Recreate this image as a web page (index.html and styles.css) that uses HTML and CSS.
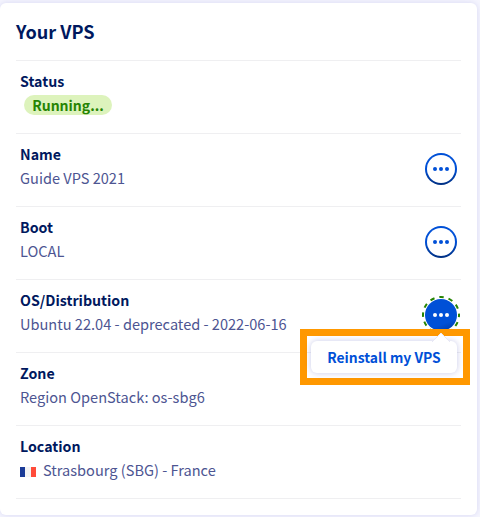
FILE: index.html
```html
<!DOCTYPE html>
<html lang="en">
<head>
<meta charset="utf-8">
<title>Your VPS</title>
<link rel="stylesheet" href="styles.css">
</head>
<body>
<section class="card">
  <h2 class="title">Your VPS</h2>
  <dl class="list">
    <div class="row"><div class="text"><dt>Status</dt><dd><span class="badge">Running...</span></dd></div></div>
    <div class="row"><div class="text"><dt>Name</dt><dd>Guide VPS 2021</dd></div>
      <button class="action" aria-label="Name actions"><i></i><i></i><i></i></button></div>
    <div class="row"><div class="text"><dt>Boot</dt><dd>LOCAL</dd></div>
      <button class="action" aria-label="Boot actions"><i></i><i></i><i></i></button></div>
    <div class="row"><div class="text"><dt>OS/Distribution</dt><dd>Ubuntu 22.04 - deprecated - 2022-06-16</dd></div>
      <button class="action active" aria-label="OS actions"><svg class="focus" viewBox="0 0 38 38"><circle cx="19" cy="19" r="18"/></svg><i></i><i></i><i></i></button>
      <div class="highlight"><div class="menu"><svg class="arrow" viewBox="0 0 18 9"><path d="M0 9 9 0l9 9"/></svg><span>Reinstall my VPS</span></div></div></div>
    <div class="row"><div class="text"><dt>Zone</dt><dd>Region OpenStack: os-sbg6</dd></div></div>
    <div class="row"><div class="text"><dt>Location</dt><dd class="place"><span class="flag"></span>Strasbourg (SBG) - France</dd></div></div>
  </dl>
</section>
</body>
</html>
```
FILE: styles.css
```css
* { box-sizing: border-box; }
body {
  margin: 0;
  padding: 3px 3px 2px 0;
  height: 517px;
  overflow: hidden;
  background: #f5f5fe;
  font: 14.2px/24px "Noto Sans CJK SC", "Open Sans", sans-serif;
  color: #4d5592;
}
.card {
  height: 512px;
  padding: 0 16px;
  background: #fff;
  border-radius: 6px;
  box-shadow: 0 0 6px rgba(0, 14, 156, .12);
}
.title {
  margin: 0;
  height: 58px;
  border-bottom: 1px solid #efeff1;
  color: #00185e;
  font-size: 18.1px;
  line-height: 56px;
  font-weight: 700;
}
.list { margin: 0; }
.row {
  position: relative;
  display: flex;
  align-items: flex-start;
  justify-content: space-between;
  height: 73px;
  padding: 8px 4px 0;
  border-bottom: 1px solid #efeff1;
}
.text { white-space: nowrap; }
dt { color: #00185e; font-weight: 700; }
dd { margin: 0; font-size: 14.58px; }
.badge {
  display: block;
  width: 88px;
  height: 20px;
  margin: 2px 0 2px 4px;
  border-radius: 10px;
  background: #ddf3bc;
  color: #268403;
  font-size: 14px;
  font-weight: 700;
  line-height: 20px;
  text-align: center;
}
.action {
  position: relative;
  display: flex;
  align-items: center;
  justify-content: center;
  gap: 2px;
  width: 32px;
  height: 32px;
  margin-top: 11px;
  padding: 0;
  border: 2px solid transparent;
  border-radius: 50%;
  background: linear-gradient(#fff, #fff) padding-box, linear-gradient(#0050d7 50%, #002f80) border-box;
}
.action i { width: 4px; height: 4px; border-radius: 50%; background: #0050d7; }
.active { background: linear-gradient(160deg, #0050d7 72%, #00369a) border-box; }
.active i { background: #fff; }
.focus { position: absolute; top: -5px; left: -5px; width: 38px; height: 38px; }
.focus circle { fill: none; stroke: #268403; stroke-width: 2; stroke-dasharray: 4.5 4.925; stroke-dashoffset: 2.25; }
.highlight {
  position: absolute;
  z-index: 2;
  top: 49px;
  left: 284px;
  width: 170px;
  height: 56px;
  padding: 5px 6px;
  border: 7px solid #ff9800;
}
.menu {
  position: relative;
  width: 146px;
  height: 32px;
  margin: 0 -2px 0 -2px;
  border-radius: 6px;
  background: #fff;
  box-shadow: 0 0 6px rgba(0, 14, 156, .22);
  color: #0050d7;
  font-size: 13.9px;
  font-weight: 700;
  line-height: 32px;
  text-align: center;
  white-space: nowrap;
}
.arrow { position: absolute; top: -8px; left: 121px; width: 18px; height: 9px; }
.arrow path { fill: #fff; stroke: #e8e8f4; stroke-width: 1; }
.place { display: flex; align-items: center; }
.flag {
  width: 16px;
  height: 10px;
  margin: 3px 7px 0 0;
  background: linear-gradient(90deg, #1b3b97 33%, #f4f4f4 33% 66%, #ff4b3a 66%);
}
```
